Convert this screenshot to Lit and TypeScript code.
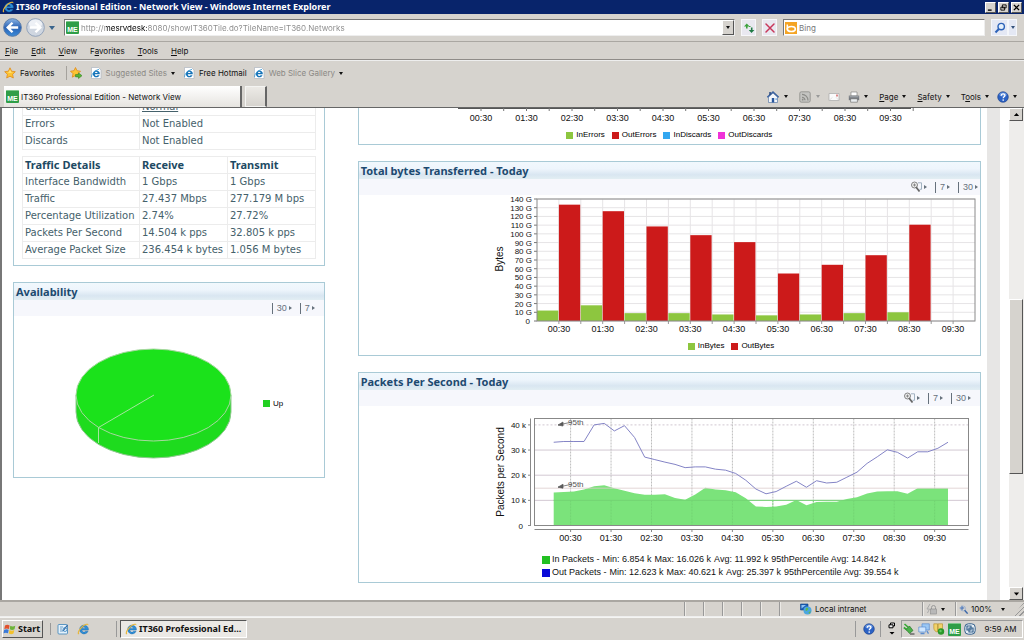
import { LitElement, html, svg, css, nothing, TemplateResult } from "lit";
import { customElement, property } from "lit/decorators.js";

const HOURS = ["00:30", "01:30", "02:30", "03:30", "04:30", "05:30", "06:30", "07:30", "08:30", "09:30"];

/* ---------- icons ---------- */

const ieGlyph = svg`
  <path d="M11 4.6a4.4 4.4 0 1 0 .1 3.6H8.4a1.9 1.9 0 0 1-3.5-1.1h6.5c.1-1 0-1.700-.4-2.500zM5 5.400a1.800 1.800 0 0 1 3.500 0z" fill="#2f8fd8" stroke="#1560a0" stroke-width=".4"/>
  <path d="M1 11.200C-.3 9 3.600 2.800 8.600 1c2-.7 3.200-.3 2.700 1.400C10.600.9 7.200 2.300 4.400 5.400 2.200 7.900 1.200 10 2.300 10.700c-.5.6-1 .8-1.300.5z" fill="#e9b73a"/>`;

const icons: Record<string, TemplateResult> = {
  ie: svg`${ieGlyph}`,
  iePage: svg`<path d="M1.500.5h7l2.500 2.500v8.500h-9.500z" fill="#fff" stroke="#aeb6c0" stroke-width=".7"/>
    <path d="M9.500 5.300a3.500 3.500 0 1 0 .1 2.900H7.600a1.500 1.500 0 0 1-2.800-.9h5c0-.8 0-1.400-.3-2zM4.900 5.900a1.400 1.400 0 0 1 2.700 0z" fill="#1673b8"/>
    <path d="M1.600 10C1.100 7.500 4.500 3.500 9 2.300" fill="none" stroke="#4aa0d8" stroke-width=".9"/>`,
  star: svg`<path d="M6 .8l1.600 3.400 3.700.5-2.700 2.600.7 3.700L6 9.200 2.700 11l.7-3.700L.7 4.700l3.700-.5z" fill="#fdc431" stroke="#e08a1c" stroke-width=".8"/>
    <path d="M6 2.600l1 2.300 2.300.4-3.300.4-2.300-.3 1.500-.6z" fill="#ffe88a"/>`,
  starAdd: svg`<path d="M5.500.5l1.500 3.200 3.500.5L8 6.700l.6 3.500L5.500 8.500 2.300 10.200l.7-3.500L.5 4.200 4 3.700z" fill="#fdc431" stroke="#e08a1c" stroke-width=".8"/>
    <path d="M5.500 7.500h3V5.800L12 8.700 8.500 11.600V9.900h-3z" fill="#56b435" stroke="#2c7a18" stroke-width=".5"/>`,
  home: svg`<path d="M1.500 6v5.500h9V6L6 2z" fill="#f3f6fb" stroke="#5b7ba8" stroke-width=".7"/>
    <path d="M.3 6.300L6 1l5.700 5.300" fill="none" stroke="#3b62a0" stroke-width="1.400"/>
    <path d="M2.300 1h1.500v2.200l-1.500 1.300z" fill="#26477e"/><path d="M4.800 7h2.400v4.500H4.800z" fill="#28569c"/><path d="M8.400 7.200h1.500v1.700H8.400z" fill="#7fb0e0"/>`,
  feed: svg`<rect x=".8" y=".8" width="10.400" height="10.400" rx="1.500" fill="#c4c4c1" stroke="#8c8c88" stroke-width=".8"/>
    <g fill="none" stroke="#8c8c88" stroke-width="1.200"><path d="M3 6.300a3 3 0 0 1 3 3M3 3.400a6 6 0 0 1 6 6"/></g><circle cx="3.700" cy="8.700" r=".9" fill="#8c8c88"/>`,
  mail: svg`<path d="M1 2.500h10v7H1z" fill="#fbfbfb" stroke="#a8a8a8" stroke-width=".7"/><path d="M1 9.500l3.500-3.200M11 9.500L8 6.300" stroke="#ccc" stroke-width=".6"/><path d="M8 3.400h2v2H8z" fill="#d88"/>`,
  printer: svg`<path d="M3 1h6v4H3z" fill="#fff" stroke="#777" stroke-width=".6"/><path d="M.8 4.600h10.400v4.600H.8z" fill="#767a80"/><path d="M1.500 5.300h9v1h-9z" fill="#a9adb2"/><path d="M2.600 7.800h6.800v3.400H2.600z" fill="#e9edf0" stroke="#666" stroke-width=".6"/>`,
  help: svg`<circle cx="6" cy="6" r="5.300" fill="#2c62c4" stroke="#173c86" stroke-width=".6"/><ellipse cx="6" cy="3.500" rx="3.600" ry="2" fill="#7fa8ea" opacity=".7"/>
    <path d="M4.200 4.700c0-2.300 3.700-2.300 3.700-.2 0 1.300-1.700 1.300-1.700 2.700" fill="none" stroke="#fff" stroke-width="1.300"/><circle cx="6.200" cy="9" r=".85" fill="#fff"/>`,
  refresh: svg`<path d="M3.800 6.500V4" fill="none" stroke="#3da23d" stroke-width="1.600"/><path d="M3.800 1.500L1 4.500h5.600z" fill="#3da23d"/><path d="M6 4.500h1.500" stroke="#3da23d"/><path d="M8.700 5.500v2.800" stroke="#1f7a45" stroke-width="1.600"/><path d="M8.500 11L5.800 8h5.600z" fill="#1f7a45"/>`,
  stop: svg`<path d="M2 2l8 8M10 2l-8 8" stroke="#c8375a" stroke-width="1.500" stroke-linecap="round"/>`,
  bing: svg`<path d="M0 0h12v12H0z" fill="#f4a424"/><path d="M2.300 2.500v5" stroke="#fff" stroke-width="1.500"/><ellipse cx="6.300" cy="7" rx="4" ry="2.500" fill="#f4a424" stroke="#fff" stroke-width="1.700"/>`,
  search: svg`<circle cx="7.200" cy="4.600" r="3.200" fill="#e4f0fc" stroke="#2c62b8" stroke-width="1.400"/><path d="M4.800 7L1.500 10.500" stroke="#2c62b8" stroke-width="2"/>`,
  zoomIn: svg`<path d="M4 1v6M1 4h6" stroke="#3f6fb8" stroke-width="1.400"/><circle cx="5.500" cy="4.700" r="3.300" fill="none" stroke="#8aa6d0" stroke-width=".8"/><path d="M7.500 7l4 4.500" stroke="#3a66a8" stroke-width="2"/>`,
  lock: svg`<path d="M5.500 6V4.500a2 2 0 0 1 4 0V6" fill="none" stroke="#999" stroke-width="1"/><rect x="4.500" y="6" width="6" height="5" fill="#b8b8b8" stroke="#8c8c8c" stroke-width=".6"/><path d="M4 1L1 6h2.500L1.500 10" fill="none" stroke="#aaa" stroke-width="1"/>`,
  intranet: svg`<path d="M.5 1h7.500v6H.5z" fill="#1c5fb8" stroke="#0d3f80" stroke-width=".6"/><path d="M1.500 2h4.500l-4.500 3.500z" fill="#8fc4f4"/><circle cx="7.500" cy="7.500" r="4" fill="#4aa6e0"/><path d="M6 5c2-1 3 .5 2 1.500s-1 2-2.500 1zM8.500 9.500c1-1.500 2.400-1 2.400-1l-1.600 2.600z" fill="#62b84a"/>`,
  windows: svg`<path d="M1 2.600c1.700-1.100 3-1 4.600-.1L4.900 6C3.500 5.200 2 5.200.3 6z" fill="#e2502c"/><path d="M6.300 2.800c1.700.9 3.200.9 5 0L10.500 6.300c-1.700.8-3.200.8-4.800-.1z" fill="#6db33a"/><path d="M.2 6.800C1.800 6 3.300 6 4.700 6.800L4 10.300c-1.500-.9-3-.8-4.500 0z" fill="#3a7ad8"/><path d="M5.500 7c1.600.9 3.100.9 4.800.1l-.8 3.500c-1.600.8-3.100.8-4.700-.1z" fill="#f3c22c"/>`,
  desktop: svg`<rect x="1" y="1.500" width="9.500" height="9.500" rx="1" fill="#e4f1fb" stroke="#4c8cbc" stroke-width=".9"/><path d="M3 4h3M3 6h2M3 8h3" stroke="#4c8cbc" stroke-width=".8"/><path d="M6 8l4.500-6" stroke="#2b5f9c" stroke-width="1.200"/><circle cx="8" cy="6.500" r="2" fill="none" stroke="#3a86c0" stroke-width=".8"/>`,
  restoreTray: svg`<path d="M4.500 0h4v3h-4z" fill="#f2f2f2" stroke="#000" stroke-width="1"/><path d="M3 1.800h4v3H3z" fill="#f2f2f2" stroke="#000" stroke-width="1"/><path d="M3.500 9h5L6 11.500z"/>`,
  plug: svg`<path d="M1.500 1l4 3.500M.8 4.500l3.500 2.500" stroke="#3a3" stroke-width="1.600"/><path d="M3 6.500l3.500-3.500 3.500 4.500-3.500 3z" fill="#4bb04b" stroke="#1c6b1c" stroke-width=".6"/><path d="M7 11h4.500" stroke="#555" stroke-width="1.300"/>`,
  monitors: svg`<path d="M4 .8h7.300v6.200H4z" fill="#9cc8f4" stroke="#5a8cd0" stroke-width=".7"/><path d="M.8 4h7v5h-7z" fill="#cfe6ff" stroke="#5a8cd0" stroke-width=".7"/><path d="M2.500 10.500h4M9 8.200l1.500 2.500" stroke="#5a8cd0" stroke-width="1.300"/>`,
  shield: svg`<path d="M.8.8h3.700v8.200c-2 0-3.700-2-3.700-4zM5.200.8h4.300V5c0 2-2.300 4-4.300 4z" fill="#f1d36b" stroke="#b48a20" stroke-width=".6"/><circle cx="8" cy="8.500" r="3.200" fill="#2a982a"/><circle cx="7.500" cy="8" r="1.200" fill="#64c864"/>`,
  vm: svg`<rect x=".8" y=".8" width="10.400" height="10.400" rx="3.500" fill="#e6eef5" stroke="#35618c" stroke-width="1"/><path d="M3 3h4v4H3zM5 5h4v4H5z" fill="none" stroke="#35618c" stroke-width="1.200"/>`,
  minimize: svg`<path d="M2.500 9.500h5" stroke="#000" stroke-width="1.800"/>`,
  restore: svg`<path d="M4.500 2.500h5v4h-5zM2.500 5.500h5v4h-5z" fill="#d6d3ce" stroke="#000" stroke-width="1.200"/>`,
  close: svg`<path d="M2.500 2.500l7 7M9.500 2.500l-7 7" stroke="#000" stroke-width="1.700"/>`,
  up: svg`<path d="M6 4l3.500 4h-7z"/>`,
  down: svg`<path d="M6 8.500L2.500 4.500h7z"/>`,
  magnify: svg`<circle cx="4.500" cy="4" r="3" fill="#eee" stroke="#777" stroke-width=".9"/><path d="M3 4h3M4.500 2.500v3" stroke="#777" stroke-width=".8"/><path d="M6 6l3.500 4.500" stroke="#666" stroke-width="1.800"/><path d="M8 1.800h3.500v6.500H9.500" fill="none" stroke="#9ab" stroke-width=".9"/>`,
};

@customElement("ui-icon")
class UiIcon extends LitElement {
  @property() name = "ie";
  static styles = css`
    :host { display: block; flex: none; width: 12px; height: 12px; }
    svg { display: block; width: 100%; height: 100%; overflow: visible; }
  `;
  render() {
    return html`<svg viewBox="0 0 12 12" aria-hidden="true">${icons[this.name] ?? nothing}</svg>`;
  }
}

@customElement("me-badge")
class MeBadge extends LitElement {
  static styles = css`
    :host { display: flex; flex: none; align-items: flex-end; justify-content: center; box-sizing: border-box;
      width: 13px; height: 13px; background: #2f9e48; border-radius: 1px; color: #fff;
      border-top: 1px solid #7cc68a; font: bold 7px/8px "Liberation Sans", sans-serif; }
  `;
  render() { return html`ME`; }
}

/* ---------- portal panels ---------- */

@customElement("portal-panel")
class PortalPanel extends LitElement {
  @property() heading = "";
  @property({ attribute: false }) ranges: string[] = [];
  @property({ type: Boolean }) zoomable = false;
  @property({ type: Boolean, reflect: true }) inset = false;
  static styles = css`
    :host { display: block; border: 1px solid #a9cad6; background: #fff; }
    h2 { margin: 0; padding: 0 2px; font: bold 11px/17px "Noto Sans", sans-serif; color: #1d4a70;
      background: linear-gradient(#f1f8fd, #eef5fc 40%, #d9e6f1 75%, #e2eef3); }
    .tools { display: flex; justify-content: flex-end; align-items: center; gap: 8px; height: 16px; padding: 0 2px;
      background: #f6f7fc; }
    :host([inset]) .tools { padding-right: 9px; }
    a { display: flex; align-items: center; gap: 2px; color: #66717c; text-decoration: none;
      font: 9px/11px "Liberation Sans", sans-serif; }
    a.range { border-left: 1px solid #66717c; padding-left: 4px; }
    .arrow { border-left: 3px solid #66717c; border-top: 2px solid transparent; border-bottom: 2px solid transparent; }
  `;
  render() {
    return html`
      ${this.heading ? html`
        <h2>${this.heading}</h2>
        <div class="tools">
          ${this.zoomable ? html`<a href="#zoom" aria-label="Zoom"><ui-icon name="magnify"></ui-icon><span class="arrow"></span></a>` : nothing}
          ${this.ranges.map((r) => html`<a class="range" href="#range-${r}">${r}<span class="arrow"></span></a>`)}
        </div>` : nothing}
      <slot></slot>`;
  }
}

@customElement("chart-legend")
class ChartLegend extends LitElement {
  @property({ attribute: false }) items: [string, string][] = [];
  static styles = css`
    :host { display: flex; justify-content: center; gap: 7px; font: 8px/10px "Liberation Sans", sans-serif; color: #000; }
    span { display: flex; align-items: center; gap: 3px; }
    i { width: 7px; height: 7px; }
  `;
  render() {
    return this.items.map(([c, t]) => html`<span><i style="background:${c}"></i>${t}</span>`);
  }
}

const chartText = css`
  svg { display: block; }
  text { font-family: "Liberation Sans", sans-serif; font-size: 8px; fill: #111; }
  .hour { font-size: 9px; text-anchor: middle; }
  .tick { text-anchor: end; }
  .title { font-size: 10px; text-anchor: middle; }
`;

@customElement("errors-axis")
class ErrorsAxis extends LitElement {
  static styles = [chartText, css`:host { display: block; padding-left: 34px; } svg { margin: 0 auto; }`];
  render() {
    const x = (i: number) => 25 + i * 45.5;
    return html`<svg width="461" height="32" role="img" aria-label="Errors and discards time axis">
      <path d="M2 10.5H455" stroke="#555"/>
      ${HOURS.map((h, i) => svg`<path d="M${x(i)} 10v3M${x(i) + 22.7} 10v3" stroke="#777"/><text class="hour" x=${x(i)} y="23">${h}</text>`)}
    </svg>`;
  }
}

@customElement("bytes-chart")
class BytesChart extends LitElement {
  private received = [12, 18, 9, 9, 7.5, 6.5, 7.5, 9, 10];
  private sent = [133.5, 126, 108.5, 98.5, 90.5, 54.5, 64.5, 75.5, 110.5];
  static styles = [chartText, css`:host { display: block; }`];
  render() {
    const left = 55, top = 4, base = 126, slot = 43.8, half = slot / 2, right = left + slot * 10;
    const y = (v: number) => base - (v * (base - top)) / 140;
    const bar = (v: number, x: number, c: string) =>
      svg`<rect x=${x} y=${y(v)} width=${half - 0.6} height=${base - y(v)} fill=${c}/>`;
    return html`<svg width="498" height="144" role="img" aria-label="Total bytes transferred per hour">
      ${Array.from({ length: 15 }, (_, i) => svg`
        <path d="M${left} ${y(i * 10)}H${right}" stroke="#e6e4e6"/>
        <path d="M${left - 3} ${y(i * 10)}h3" stroke="#777"/>
        <text class="tick" x=${i ? 50 : 48} y=${y(i * 10) + 3}>${i ? `${i * 10} G` : "0"}</text>`)}
      ${Array.from({ length: 19 }, (_, i) => svg`<path d="M${left + (i + 1) * half} ${top}V${base}" stroke="#e6e4e6"/>
        <path d="M${left + (i + 1) * half} ${base}v3" stroke="#999"/>`)}
      ${this.received.map((v, i) => bar(v, left + i * slot, "#8dc63f"))}
      ${this.sent.map((v, i) => bar(v, left + i * slot + half, "#cc1a1a"))}
      <rect x=${left} y=${top} width=${right - left} height=${base - top} fill="none" stroke="#8a8a8a"/>
      ${HOURS.map((h, i) => svg`<text class="hour" x=${left + half + i * slot} y="137">${h}</text>`)}
      <text class="title" transform="translate(21 64) rotate(-90)">Bytes</text>
    </svg>`;
  }
}

@customElement("packets-chart")
class PacketsChart extends LitElement {
  private inbound = [13.1, 13.3, 13.5, 14.3, 15.6, 16, 14.8, 13.8, 12.8, 12.2, 12.2, 12.4, 10.9, 10.2, 12.3, 15, 14.3, 14, 13.2, 10.8,
    7.6, 7.4, 7.6, 8.3, 10.1, 8.1, 9.3, 9.4, 9.4, 10.5, 11.2, 12.7, 13.5, 13.6, 13.6, 12.6, 14.8, 14.8, 14.8, 14.8];
  private outbound = [33.1, 33.4, 33.4, 33.4, 40, 40.6, 37.6, 39.7, 35, 27.2, 26.2, 25.2, 24.3, 23, 23.3, 23.3, 22.4, 22, 20.7, 18,
    14.5, 12.6, 13.5, 15.6, 17.6, 15.2, 17.8, 16.9, 17.2, 19.2, 21.2, 24.7, 27.3, 30.1, 29.1, 26.8, 29.3, 29.3, 30.7, 33.1];
  static styles = [chartText, css`:host { display: block; } .note { fill: #555; }`];
  render() {
    const left = 52.5, right = 486.5, top = 12.5, base = 119.5;
    const y = (k: number) => base - k * 2.515;
    const px = (i: number) => 71.7 + i * 10.11;
    const hx = (i: number) => 88.6 + i * 40.45;
    const line = (d: number[]) => d.map((v, i) => `${px(i)},${y(v)}`).join(" ");
    const note = (k: number) => svg`<path d="M76 ${y(k) - 1}l14 -3M76 ${y(k) - 1}l5 -3v4z" fill="#444" stroke="#666" stroke-width=".8"/>
      <text class="note" x="86" y=${y(k) - 1}>95th</text>`;
    return html`<svg width="498" height="147" role="img" aria-label="Packets per second over time">
      ${[10, 20, 30, 40].map((k) => svg`<path d="M${left} ${y(k)}H${right}" stroke="#d2c8d2" stroke-dasharray=${k === 40 ? "2 2" : "none"}/>`)}
      ${HOURS.map((_, i) => svg`<path d="M${hx(i)} ${top}V${base}" stroke="#bdbdbd" stroke-dasharray="2 1"/>`)}
      <polygon points="${px(0)},${base} ${line(this.inbound)} ${px(39)},${base}" fill="#7be37b"/>
      ${[10].map((k) => svg`<path d="M${px(0)} ${y(k)}H${px(39)}" stroke="#73d473"/>`)}
      ${HOURS.map((_, i) => svg`<path d="M${hx(i)} ${y(10)}V${base}" stroke="#73d473" stroke-dasharray="2 1"/>`)}
      <path d="M${left} ${y(14.842)}H${right}" stroke="#dcc" stroke-width=".8"/>
      <polyline points=${line(this.outbound)} fill="none" stroke="#8484c6"/>
      <rect x=${left} y=${top} width=${right - left} height=${base - top} fill="none" stroke="#888"/>
      <path d="M48.500 ${top}V${base}M${left} 123.500H${right}" stroke="#888"/>
      ${[0, 10, 20, 30, 40].map((k) => svg`<path d="M46 ${y(k)}h3" stroke="#888"/>
        <text class="tick" x=${k ? 44 : 41} y=${y(k) + 3}>${k ? `${k} k` : "0"}</text>`)}
      ${HOURS.map((h, i) => svg`<path d="M${hx(i)} 123v3" stroke="#888"/><text class="hour" x=${hx(i)} y="135">${h}</text>`)}
      ${note(39.554)}${note(14.842)}
      <text class="title" transform="translate(22 66) rotate(-90)">Packets per Second</text>
    </svg>`;
  }
}

@customElement("availability-pie")
class AvailabilityPie extends LitElement {
  static styles = css`
    :host { display: flex; align-items: center; gap: 31px; padding: 32px 0 18px 61px; }
    svg { display: block; }
  `;
  render() {
    return html`<svg width="157" height="111" role="img" aria-label="Up 100%">
      <path d="M1 47v17a77.500 46 0 0 0 155 0V47z" fill="#1edb1e" stroke="#8fc88f"/>
      <ellipse cx="78.500" cy="47" rx="77.500" ry="46" fill="#1be21b" stroke="#a8d8a0"/>
      <path d="M79 47L23.500 79.500V95" fill="none" stroke="#a6e6a0"/>
    </svg><chart-legend .items=${[["#22d022", "Up"]]}></chart-legend>`;
  }
}

/* ---------- application ---------- */

@customElement("app-root")
class AppRoot extends LitElement {
  static styles = css`
    :host { display: flex; flex-direction: column; height: 100vh; overflow: hidden; box-sizing: border-box;
      background: #d6d3ce; color: #111; font: 8px/12px Inter, sans-serif; }
    * { box-sizing: border-box; }
    button { display: flex; align-items: center; gap: 4px; padding: 0; border: 0; background: none; color: inherit; font: inherit; white-space: nowrap; }
    input { font: inherit; border: 0; outline: 0; padding: 0; min-width: 0; background: none; }
    .caret { flex: none; border: 2px solid transparent; border-top: 3px solid #111; border-bottom: 0; }
    .dim { color: #8b8985; }
    .dim .caret { border-top-color: #111; }
    .faint { border-top-color: #999; }
    .grow { flex: 1; }
    .raised { border: 1px solid; border-color: #fff #555 #555 #fff; background: #d6d3ce; }

    .titlebar { display: flex; align-items: center; gap: 2px; height: 14px; padding: 0 2px; background: #08246b; color: #fff; }
    .titlebar h1 { margin: 0; flex: 1; font: bold 9px/14px "Noto Sans", sans-serif; }
    .titlebar .raised { width: 11px; height: 11px; justify-content: center; }
    .titlebar .raised ui-icon { width: 9px; height: 9px; }

    .address { display: flex; align-items: center; gap: 6px; height: 28px; padding: 0 7px 0 3px; border-bottom: 1px solid #aaa7a2; }
    .nav { width: 19px; height: 19px; margin-right: -2px; }
    .nav svg { width: 19px; height: 19px; }
    .history { margin-right: 3px; border-width: 3px; border-top: 4px solid #3a648c; border-bottom: 0; }
    .field { display: flex; align-items: center; height: 17px; gap: 2px; padding-left: 1px; background: #fff; border: 1px solid; border-color: #777 #eee #eee #777; }
    .url { flex: 1; }
    .url input { flex: 1; color: transparent; -webkit-background-clip: text; background-clip: text;
      background-image: linear-gradient(90deg, #888 25px, #000 25px, #000 66px, #888 66px); }
    .url .raised { width: 12px; height: 15px; justify-content: center; }
    .square { width: 15px; height: 17px; justify-content: center; background: #e9e8f0; border: 1px solid #f7f7fa; }
    .search { flex: 0 0 202px; }
    .search input { flex: 1; }
    .search input::placeholder { color: #777; opacity: 1; }
    .find { display: flex; }
    .find button { height: 17px; justify-content: center; background: #e4e8f4; border: 1px solid #f4f6fa; }
    .find .go { width: 17px; }
    .find .more { width: 9px; }
    .find .caret { border-top-color: #35527c; }

    .menu { display: flex; align-items: center; gap: 13px; height: 18px; padding: 0 5px; border-bottom: 1px solid #8f8c88; }
    .favorites { display: flex; align-items: center; height: 25px; padding: 0 4px; gap: 6px; border-top: 1px solid #eee; }
    .favorites .first { margin-right: 5px; }
    .favorites .link { margin-right: 2px; }
    .divider { width: 1px; height: 14px; margin-right: -3px; background: #a5a29d; }

    .tabs { display: flex; align-items: stretch; height: 23px; padding: 1px 7px 0 4px; gap: 3px; border-bottom: 1px solid #666; }
    .tab { flex: 0 0 238px; padding-left: 2px; gap: 2px; background: linear-gradient(#fff, #e6e4e0); border-right: 2px solid #666; }
    .newtab { width: 22px; background: linear-gradient(#eceae6, #d6d3ce); border: 1px solid #f4f4f2; border-right: 2px solid #666; }
    .commands { display: flex; align-items: center; gap: 11px; margin-left: auto; }
    .commands button { gap: 5px; }
    .commands .text { gap: 4px; }
    .commands .tight { gap: 4px; margin-left: -3px; }

    .viewport { flex: 1; display: flex; min-height: 0; overflow: hidden; background: #fff; border-left: 2px solid #777; }
    .page { flex: 1; min-width: 0; overflow: hidden; padding: 0 6px 0 11px; }
    .columns { display: grid; grid-template-columns: 1fr 2fr; gap: 33px; margin-top: -10px; align-items: start; }
    .left, .right { display: flex; flex-direction: column; gap: 16px; }
    .gutter { width: 13px; margin-right: 9px; background: #e7e6e5; }

    .details { padding: 0 8px 6px; border-top: 0; }
    .details table { width: 100%; border-collapse: collapse; table-layout: fixed; font: 10px/12px "DejaVu Sans", sans-serif; color: #45616b; }
    .details table + table { margin-top: 6px; }
    th, td { height: 17px; padding: 0 0 0 2px; text-align: left; border: 1px solid #ececec; white-space: nowrap; }
    thead th { font: bold 11px/12px "Noto Sans", sans-serif; color: #1d4a63; }
    tbody th { font-weight: normal; }
    .c1 { width: 117px; }
    .c2 { width: 88px; }
    td a { color: inherit; }
    .errors { border-top: 0; padding-bottom: 4px; }
    .plot { display: flex; flex-direction: column; align-items: flex-end; }
    .plot chart-legend { width: 498px; }
    .bytes { padding: 0 0 4px; gap: 2px; }
    .packets { padding-bottom: 3px; }
    .stats { width: 438px; display: flex; flex-direction: column; font: 9px/13px "Liberation Sans", sans-serif; }
    .stats div { display: flex; align-items: center; gap: 3px; white-space: nowrap; }
    .stats i { width: 8px; height: 8px; margin-right: -1px; }

    .scroll { width: 15px; display: flex; flex-direction: column; padding-right: 1px; background: #eeedeb; }
    .scroll button { height: 13px; justify-content: center; }
    .scroll ui-icon { width: 9px; height: 9px; }
    .before { flex: 178; }
    .thumb { flex: 173; }
    .after { flex: 113; }

    .status { display: flex; align-items: stretch; height: 17px; border-top: 2px solid #aaa7a2; border-bottom: 1px solid #eee; }
    .status > span { display: flex; align-items: center; gap: 3px; border-left: 1px solid #999; box-shadow: inset 1px 0 #eceae6; }
    .cell { width: 19px; }
    .zone { width: 143px; padding-left: 20px; }
    .lock { width: 33px; padding-left: 3px; }
    .zoom { width: 69px; padding-left: 3px; }
    .zoom ui-icon { width: 9px; height: 9px; }
    .grip { margin-left: 5px; width: 11px; height: 14px; background: repeating-linear-gradient(135deg, #d6d3ce 0 2px, #999 2px 3px); clip-path: polygon(100% 0, 100% 100%, 0 100%); }

    .taskbar { display: flex; align-items: center; height: 23px; padding: 0 1px 0 2px; border-top: 1px solid #f5f5f3; font-size: 8px; }
    .start { width: 41px; height: 18px; padding-left: 1px; gap: 2px; font: bold 9px/12px "Noto Sans", sans-serif; }
    .quick { display: flex; gap: 8px; margin: 0 27px 0 7px; padding-left: 6px; border-left: 1px solid #999; }
    .task { flex: 0 0 127px; height: 18px; margin-left: 3px; padding-left: 4px; gap: 2px; font: bold 9px/12px "Noto Sans", sans-serif;
      background: #ebe9e5; border: 1px solid; border-color: #555 #fff #fff #555; }
    .mark { width: 1px; height: 16px; background: #999; }
    .notify { display: flex; align-items: center; gap: 5px; }
    .notify .mark:first-child { margin-right: 2px; }
    .tray { display: flex; align-items: center; gap: 3px; width: 122px; height: 18px; margin-left: 3px; padding-left: 1px; border: 1px solid; border-color: #999 #fff #fff #999; }
    .tray time { margin: 0 auto; }
  `;

  private menu(key: string, before: string, after: string, more = false) {
    return html`<button class=${more ? "text" : ""}><span>${before}<u>${key}</u>${after}</span>${more ? html`<span class="caret"></span>` : nothing}</button>`;
  }

  private chrome() {
    return html`
      <header class="titlebar">
        <ui-icon name="ie"></ui-icon>
        <h1>IT360 Professional Edition - Network View - Windows Internet Explorer</h1>
        <button class="raised" aria-label="Minimize"><ui-icon name="minimize"></ui-icon></button>
        <button class="raised" aria-label="Restore"><ui-icon name="restore"></ui-icon></button>
        <button class="raised" aria-label="Close"><ui-icon name="close"></ui-icon></button>
      </header>
      <div class="address">
        <button class="nav" aria-label="Back"><svg viewBox="0 0 20 20"><defs><linearGradient id="b" x2="0" y2="1"><stop stop-color="#8ab4e4"/><stop offset=".5" stop-color="#2a62b4"/><stop offset="1" stop-color="#3c8cd8"/></linearGradient></defs>
          <circle cx="10" cy="10" r="9.300" fill="url(#b)" stroke="#5578a8" stroke-width="1"/><path d="M16 10H6M10 5l-5 5 5 5" fill="none" stroke="#fff" stroke-width="2.600"/></svg></button>
        <button class="nav" aria-label="Forward"><svg viewBox="0 0 20 20"><circle cx="10" cy="10" r="9.300" fill="#cfd6e0" stroke="#8fa0b8"/><ellipse cx="10" cy="6" rx="7" ry="4.500" fill="#eef1f6"/><path d="M4 10h10M10 5l5 5-5 5" fill="none" stroke="#fff" stroke-width="2.600"/></svg></button>
        <span class="caret history"></span>
        <div class="field url"><me-badge></me-badge><input aria-label="Address" value="http://mesrvdesk:8080/showIT360Tile.do?TileName=IT360.Networks" />
          <button class="raised" aria-label="Show addresses"><span class="caret"></span></button></div>
        <button class="square" aria-label="Refresh"><ui-icon name="refresh"></ui-icon></button>
        <button class="square" aria-label="Stop"><ui-icon name="stop"></ui-icon></button>
        <div class="field search"><ui-icon name="bing"></ui-icon><input aria-label="Search" placeholder="Bing" /></div>
        <div class="find"><button class="go" aria-label="Search"><ui-icon name="search"></ui-icon></button><button class="more" aria-label="Search options"><span class="caret"></span></button></div>
      </div>
      <nav class="menu">
        ${this.menu("F", "", "ile")}${this.menu("E", "", "dit")}${this.menu("V", "", "iew")}${this.menu("a", "F", "vorites")}${this.menu("T", "", "ools")}${this.menu("H", "", "elp")}
      </nav>
      <div class="favorites">
        <button class="first"><ui-icon name="star"></ui-icon>Favorites</button>
        <span class="divider"></span>
        <button class="link" aria-label="Add to Favorites Bar"><ui-icon name="starAdd"></ui-icon></button>
        <button class="link dim"><ui-icon name="iePage"></ui-icon>Suggested Sites<span class="caret"></span></button>
        <button><ui-icon name="iePage"></ui-icon>Free Hotmail</button>
        <button class="dim"><ui-icon name="iePage"></ui-icon>Web Slice Gallery<span class="caret"></span></button>
      </div>
      <div class="tabs">
        <button class="tab"><me-badge></me-badge>IT360 Professional Edition - Network View</button>
        <button class="newtab" aria-label="New tab"></button>
        <div class="commands">
          <button aria-label="Home"><ui-icon name="home"></ui-icon><span class="caret"></span></button>
          <button aria-label="Feeds"><ui-icon name="feed"></ui-icon><span class="caret faint"></span></button>
          <button class="tight" aria-label="Read mail"><ui-icon name="mail"></ui-icon></button>
          <button class="tight" aria-label="Print"><ui-icon name="printer"></ui-icon><span class="caret"></span></button>
          ${this.menu("P", "", "age", true)}${this.menu("S", "", "afety", true)}${this.menu("o", "T", "ols", true)}
          <button class="tight" aria-label="Help"><ui-icon name="help"></ui-icon><span class="caret"></span></button>
        </div>
      </div>`;
  }

  private page() {
    const traffic = [
      ["Interface Bandwidth", "1 Gbps", "1 Gbps"],
      ["Traffic", "27.437 Mbps", "277.179 M bps"],
      ["Percentage Utilization", "2.74%", "27.72%"],
      ["Packets Per Second", "14.504 k pps", "32.805 k pps"],
      ["Average Packet Size", "236.454 k bytes", "1.056 M bytes"],
    ];
    const stats = [
      ["#22c022", "In Packets -", "Min: 6.854 k", "Max: 16.026 k", "Avg: 11.992 k", "95thPercentile Avg: 14.842 k"],
      ["#0a0ad8", "Out Packets -", "Min: 12.623 k", "Max: 40.621 k", "Avg: 25.397 k", "95thPercentile Avg: 39.554 k"],
    ];
    return html`<main class="columns">
      <div class="left">
        <portal-panel class="details">
          <table><colgroup><col class="c1" /><col /></colgroup><tbody>
            <tr><th>Utilization</th><td><a href="#utilization">Normal</a></td></tr>
            <tr><th>Errors</th><td>Not Enabled</td></tr>
            <tr><th>Discards</th><td>Not Enabled</td></tr>
          </tbody></table>
          <table><colgroup><col class="c1" /><col class="c2" /><col /></colgroup>
            <thead><tr><th>Traffic Details</th><th>Receive</th><th>Transmit</th></tr></thead>
            <tbody>${traffic.map(([a, b, c]) => html`<tr><th>${a}</th><td>${b}</td><td>${c}</td></tr>`)}</tbody>
          </table>
        </portal-panel>
        <portal-panel inset heading="Availability" .ranges=${["30", "7"]}><availability-pie></availability-pie></portal-panel>
      </div>
      <div class="right">
        <portal-panel class="errors"><errors-axis></errors-axis>
          <chart-legend .items=${[["#8dc63f", "InErrors"], ["#cc1a1a", "OutErrors"], ["#33a7f0", "InDiscards"], ["#f032d8", "OutDiscards"]]}></chart-legend>
        </portal-panel>
        <portal-panel heading="Total bytes Transferred - Today" zoomable .ranges=${["7", "30"]}>
          <div class="plot bytes"><bytes-chart></bytes-chart>
            <chart-legend .items=${[["#8dc63f", "InBytes"], ["#cc1a1a", "OutBytes"]]}></chart-legend></div>
        </portal-panel>
        <portal-panel inset heading="Packets Per Second - Today" zoomable .ranges=${["7", "30"]}>
          <div class="plot packets"><packets-chart></packets-chart>
            <div class="stats">${stats.map(([c, ...t]) => html`<div><i style="background:${c}"></i>${t.map((s) => html`<span>${s}</span>`)}</div>`)}</div></div>
        </portal-panel>
      </div>
    </main>`;
  }

  render() {
    return html`
      ${this.chrome()}
      <div class="viewport">
        <div class="page">${this.page()}</div>
        <div class="gutter"></div>
        <div class="scroll">
          <button class="raised" aria-label="Scroll up"><ui-icon name="up"></ui-icon></button>
          <div class="before"></div><div class="thumb raised"></div><div class="after"></div>
          <button class="raised" aria-label="Scroll down"><ui-icon name="down"></ui-icon></button>
        </div>
      </div>
      <div class="status">
        <div class="grow"></div>
        <span class="cell"></span><span class="cell"></span><span class="cell"></span><span class="cell"></span><span class="cell"></span>
        <span class="zone"><ui-icon name="intranet"></ui-icon>Local intranet</span>
        <span class="lock"><ui-icon name="lock"></ui-icon><i class="caret"></i></span>
        <span class="zoom"><ui-icon name="zoomIn"></ui-icon>100%<i class="grow"></i><i class="caret"></i><i class="grip"></i></span>
      </div>
      <footer class="taskbar">
        <button class="start raised"><ui-icon name="windows"></ui-icon>Start</button>
        <div class="quick"><button aria-label="Show desktop"><ui-icon name="desktop"></ui-icon></button><button aria-label="Internet Explorer"><ui-icon name="ie"></ui-icon></button></div>
        <span class="mark"></span>
        <button class="task"><ui-icon name="ie"></ui-icon>IT360 Professional Ed...</button>
        <div class="grow"></div>
        <div class="notify"><span class="mark"></span><ui-icon name="help"></ui-icon><span class="mark"></span><ui-icon name="restoreTray"></ui-icon></div>
        <div class="tray"><ui-icon name="plug"></ui-icon><ui-icon name="monitors"></ui-icon><ui-icon name="shield"></ui-icon><me-badge></me-badge><ui-icon name="vm"></ui-icon><time>9:59 AM</time></div>
      </footer>`;
  }
}
